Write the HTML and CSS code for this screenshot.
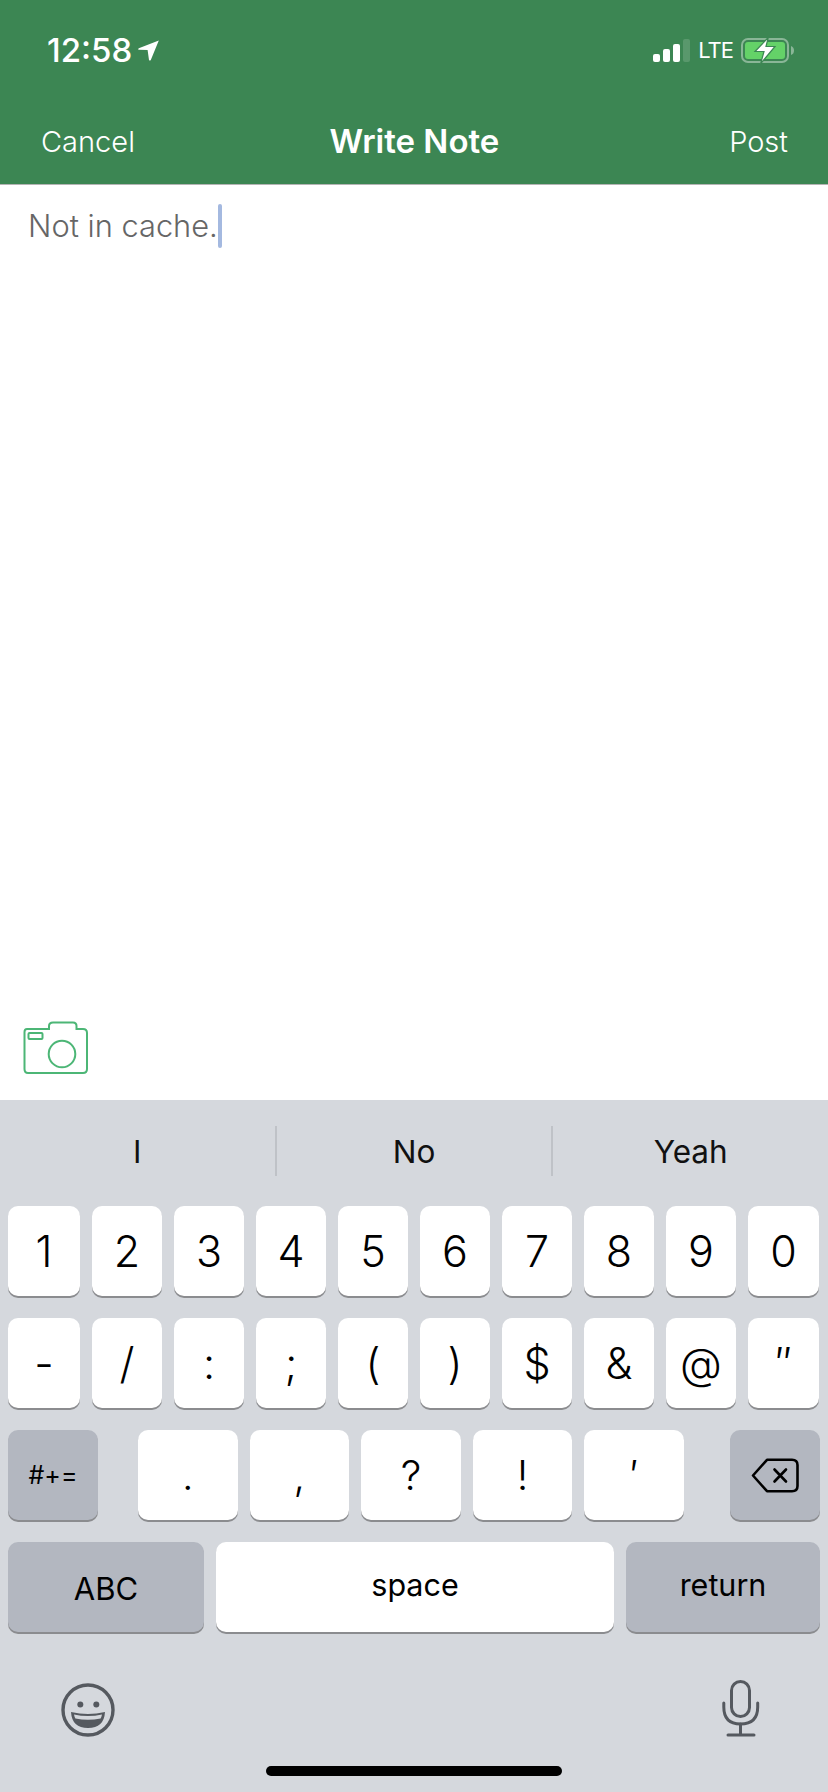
FILE: index.html
```html
<!DOCTYPE html>
<html>
<head>
    <title>Write Note</title>
    <link rel="stylesheet" href="styles.css">
</head>
<body>
    <div class="app">
        <header class="top">
            <div class="status">
                <div class="status-left">
                    <span class="time">12:58</span>
                    <svg class="arrow" width="21" height="21" viewBox="0 0 21 21">
                        <path d="M20.8 0.4 L0.8 8.2 Q-0.4 9.4 1 9.8 L9.6 10 L11 20 Q11.8 21.2 12.8 20 Z" fill="#fff"/>
                    </svg>
                </div>
                <div class="status-right">
                    <div class="signal">
                        <span class="bar bar-1"></span>
                        <span class="bar bar-2"></span>
                        <span class="bar bar-3"></span>
                        <span class="bar bar-4"></span>
                    </div>
                    <span class="lte">LTE</span>
                    <svg class="battery" width="54" height="27" viewBox="0 0 54 27">
                        <rect x="1" y="2" width="46" height="23" rx="6" fill="none" stroke="#fff" stroke-opacity="0.4" stroke-width="2"/>
                        <rect x="4" y="5" width="40" height="17" rx="3" fill="#64d268"/>
                        <path d="M50 9 Q53 10 53 13.5 Q53 17 50 18 Z" fill="#fff" fill-opacity="0.4"/>
                        <path d="M27.3 0.5 L14 14.5 L23 14.5 L19.7 26.5 L34 9.5 L25 9.5 Z" fill="#fff" stroke="#3c8653" stroke-width="1.2"/>
                    </svg>
                </div>
            </div>
            <nav class="nav">
                <span class="nav-btn">Cancel</span>
                <span class="nav-title">Write Note</span>
                <span class="nav-btn nav-post">Post</span>
            </nav>
        </header>

        <main class="note">
            <div class="note-text">Not in cache.<span class="cursor"></span></div>
        </main>

        <div class="tools">
            <svg width="66" height="54" viewBox="0 0 66 54" fill="none" stroke="#4cb676" stroke-width="2">
                <path d="M4 8 H26 V5 Q26 1.5 30 1.5 H50 Q53.5 1.5 53.5 5 V8 H60 Q64 8 64 12 V48 Q64 52 60 52 H5 Q1.5 52 1.5 48 V11 Q1.5 8 4 8 Z"/>
                <rect x="5.5" y="12" width="14" height="6" rx="1"/>
                <circle cx="39" cy="33" r="13.3"/>
            </svg>
        </div>

        <section class="keyboard">
            <div class="suggestions">
                <span class="suggestion">I</span>
                <span class="suggestion">No</span>
                <span class="suggestion">Yeah</span>
            </div>

            <div class="rows">
                <div class="row row-keys">
                    <span class="key">1</span><span class="key">2</span><span class="key">3</span><span class="key">4</span><span class="key">5</span><span class="key">6</span><span class="key">7</span><span class="key">8</span><span class="key">9</span><span class="key">0</span>
                </div>
                <div class="row row-keys">
                    <span class="key">-</span><span class="key">/</span><span class="key">:</span><span class="key">;</span><span class="key">(</span><span class="key">)</span><span class="key">$</span><span class="key">&amp;</span><span class="key">@</span><span class="key">″</span>
                </div>
                <div class="row">
                    <span class="key key-mod key-symbols">#+=</span>
                    <span class="key key-punct">.</span><span class="key key-punct">,</span><span class="key key-punct">?</span><span class="key key-punct">!</span><span class="key key-punct">′</span>
                    <span class="key key-mod key-delete">
                        <svg width="48" height="35" viewBox="0 0 48 35" fill="none" stroke="#000" stroke-width="2.6" stroke-linejoin="round" stroke-linecap="round">
                            <path d="M16 1.8 H41 Q46.5 1.8 46.5 7 V28 Q46.5 33.2 41 33.2 H16 L2 17.5 Z"/>
                            <path d="M23.5 11.5 L35 23.5 M35 11.5 L23.5 23.5"/>
                        </svg>
                    </span>
                </div>
                <div class="row">
                    <span class="key key-mod key-abc">ABC</span>
                    <span class="key key-word key-space">space</span>
                    <span class="key key-mod key-word key-return">return</span>
                </div>
            </div>

            <div class="kb-bottom">
                <svg width="54" height="54" viewBox="0 0 54 54">
                    <circle cx="27" cy="27" r="25" fill="none" stroke="#55595f" stroke-width="3.4"/>
                    <circle cx="19.3" cy="21.5" r="3" fill="#55595f"/>
                    <circle cx="35.3" cy="21.5" r="3" fill="#55595f"/>
                    <path d="M10 29 Q27 33 44 29 Q43 45 27 45 Q11 45 10 29 Z" fill="#55595f"/>
                    <path d="M13 31.6 Q27 34.6 41 31.6 Q40.5 34.2 39.6 35.4 Q27 38 14.4 35.4 Q13.4 34 13 31.6 Z" fill="#d5d8dd"/>
                </svg>
                <svg width="38" height="57" viewBox="0 0 38 57" fill="none" stroke="#55595f" stroke-width="3" stroke-linecap="round">
                    <rect x="9.5" y="1.5" width="18" height="35" rx="9"/>
                    <path d="M1.8 23 V27 Q1.8 44 18.5 44 Q35.7 44 35.7 27 V23"/>
                    <path d="M18.5 44 V54.5 M6 55 H32"/>
                </svg>
            </div>

            <div class="home-bar"></div>
        </section>
    </div>
</body>
</html>
```

FILE: styles.css
```css
body {
    margin: 0;
    font-family: Inter, "Liberation Sans", sans-serif;
    background-color: #fff;
}

.app {
    display: flex;
    flex-direction: column;
    width: 828px;
    height: 1792px;
    overflow: hidden;
}

.top {
    background-color: #3c8653;
    color: #fff;
    height: 184px;
    border-bottom: 1px solid #b4b4b4;
}

.status {
    display: flex;
    justify-content: space-between;
    align-items: center;
    height: 36px;
    padding: 32px 33px 0 47px;
}

.status-left {
    display: flex;
    align-items: center;
    gap: 6px;
}

.time {
    font-size: 33px;
    font-weight: 500;
}

.status-right {
    display: flex;
    align-items: center;
    gap: 8px;
}

.signal {
    display: flex;
    align-items: flex-end;
    gap: 3px;
    height: 23px;
}

.bar {
    width: 7px;
    border-radius: 2px;
    background-color: #fff;
}

.bar-1 {
    height: 8px;
}

.bar-2 {
    height: 13px;
}

.bar-3 {
    height: 18px;
}

.bar-4 {
    height: 23px;
    background-color: rgba(255, 255, 255, 0.15);
}

.lte {
    font-size: 22px;
    letter-spacing: -1px;
}

.nav {
    display: grid;
    grid-template-columns: 1fr auto 1fr;
    align-items: center;
    padding: 53px 40px 0 41px;
}

.nav-btn {
    font-size: 29px;
    font-weight: 300;
}

.nav-post {
    justify-self: end;
}

.nav-title {
    font-size: 33px;
    font-weight: 600;
}

.note {
    flex: 1;
    padding: 19px 28px;
}

.note-text {
    display: flex;
    align-items: center;
    color: #666;
    font-size: 30.8px;
    font-weight: 300;
    line-height: 44px;
}

.cursor {
    width: 4px;
    height: 44px;
    border-radius: 2px;
    background-color: #a4b9e0;
}

.tools {
    padding: 0 0 25px 23px;
}

.tools svg {
    display: block;
}

.keyboard {
    background-color: #d5d8dd;
    height: 692px;
    padding-top: 26px;
    box-sizing: border-box;
}

.suggestions {
    display: flex;
    height: 50px;
    margin-bottom: 30px;
}

.suggestion {
    flex: 1;
    display: flex;
    justify-content: center;
    align-items: center;
    color: #111;
    font-size: 31.5px;
    border-left: 2px solid #bfc2c7;
}

.suggestion:first-child {
    border-left: none;
}

.rows {
    display: flex;
    flex-direction: column;
    gap: 22px;
}

.row {
    display: flex;
    gap: 12px;
    padding: 0 8px;
}

.row-keys {
    display: grid;
    grid-template-columns: 72px repeat(8, 70px) 71px;
}

.key {
    flex: 1;
    display: flex;
    justify-content: center;
    align-items: center;
    height: 90px;
    background-color: #fff;
    border-radius: 10px;
    box-shadow: 0 2px 0 #8b8c8f;
    color: #000;
    font-size: 43px;
    font-weight: 300;
}

.key-punct {
    font-size: 41px;
}

.key-mod {
    background-color: #b3b7c0;
    flex: none;
}

.key-symbols {
    width: 90px;
    margin-right: 28px;
    font-size: 25px;
    font-weight: 400;
}

.key-delete {
    width: 90px;
    margin-left: 34px;
}

.key-abc {
    width: 196px;
    padding-top: 3px;
    box-sizing: border-box;
    font-size: 31px;
    font-weight: 400;
}

.key-return {
    width: 194px;
}

.key-word {
    font-size: 30.5px;
    font-weight: 400;
    padding-bottom: 5px;
    box-sizing: border-box;
}

.kb-bottom {
    display: flex;
    justify-content: space-between;
    align-items: flex-end;
    height: 105px;
    padding: 0 68px 0 61px;
}

.home-bar {
    width: 296px;
    height: 10px;
    margin: 29px auto 0;
    border-radius: 5px;
    background-color: #000;
}
```
